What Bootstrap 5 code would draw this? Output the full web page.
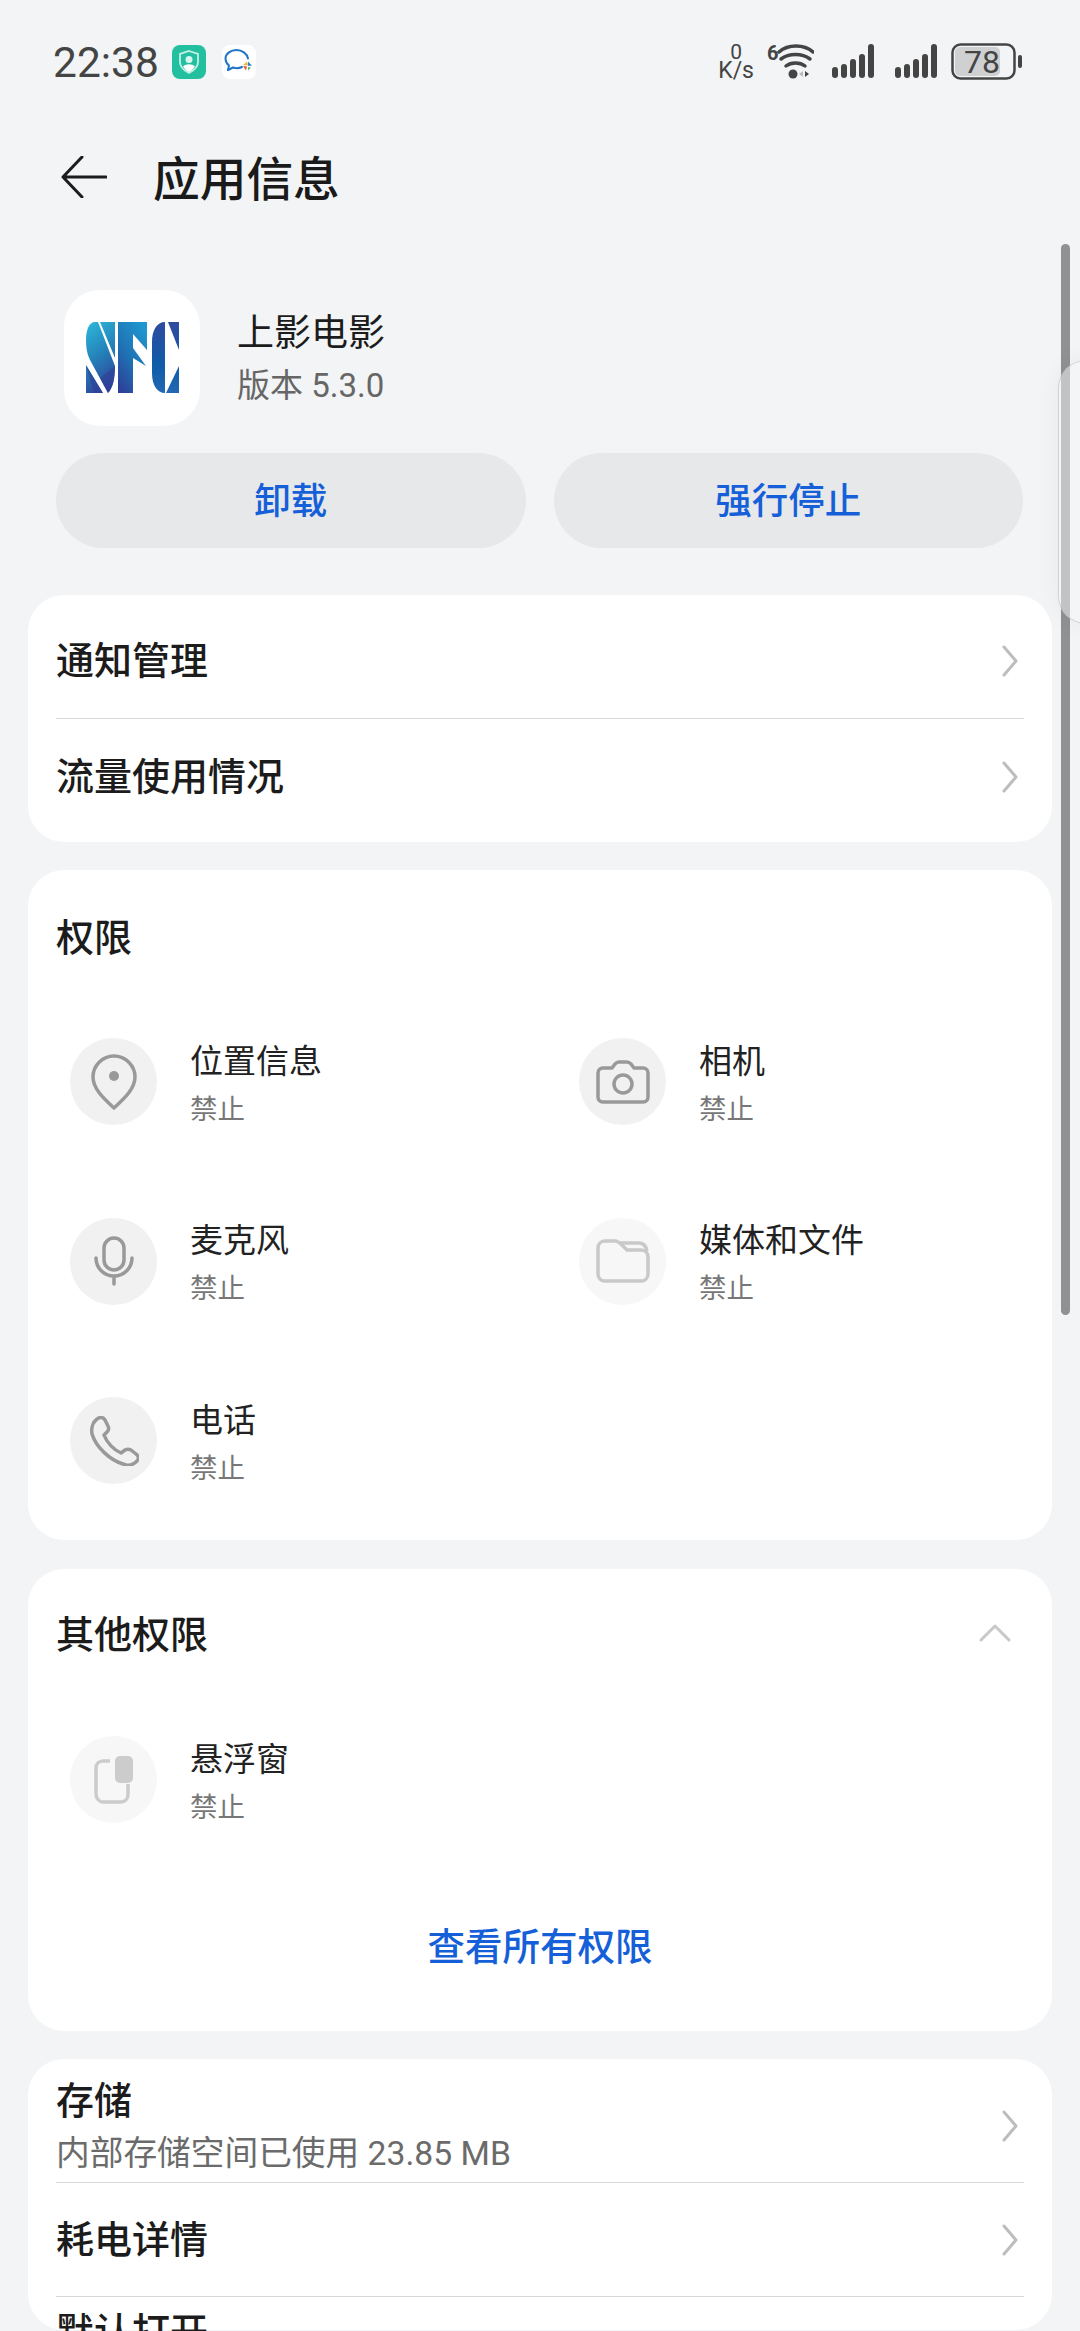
<!DOCTYPE html>
<html lang="zh"><head><meta charset="utf-8"><title>应用信息</title>
<link href="https://cdn.jsdelivr.net/npm/bootstrap@5.3.0/dist/css/bootstrap.min.css" rel="stylesheet">
<style>
html,body{height:2331px;overflow:hidden}
body{background:#f2f4f5;font-family:Roboto,"Noto Sans CJK SC",sans-serif;color:#1c1c1c;width:1080px;position:relative}
svg{display:block}
.sbar{height:122px;padding:45px 58px 0 53px;color:#444}
.clock{font-size:42.500px;line-height:36px;margin-right:13px}
.nicon{width:34px;height:34px;border-radius:8px}
.nicon.tint{background:#22c09f}
.nicon.second{margin-left:16px}
.rgroup{margin-top:-2px}
.kbs{font-size:23px;line-height:17px;text-align:center;margin-right:12px}
.kbs b{display:block;font-weight:400;font-size:21px;line-height:19px}
.gapa{margin-left:18px}.gapb{margin-left:21px}.gapc{margin-left:14px}
.tbar{height:110px;padding-left:61px}
.ttl{font-size:46.700px;font-weight:500;margin-left:46px;margin-top:6px;line-height:1;color:#1a1a1a}
.apphead{padding:0 0 0 64px;margin-top:58px;height:136px}
.logo{width:136px;height:136px;border-radius:36px;background:#fff}
.appmeta{margin-left:37px}
.appn{font-size:37px;line-height:50px}
.appv{font-size:33px;line-height:44px;color:#666;margin-top:5px}
.btnrow{padding:27px 57px 0 56px;gap:28px}
.pillbtn{flex:1;height:95px;border-radius:48px;background:#e6e8ea;color:#1560d8;font-size:36.500px;border:0;line-height:93px;padding:2px 0 0;font-weight:500}
.pane{background:#fff;border-radius:36px;margin:0 28px;padding:0 28px}
.pane1{margin-top:47px;height:247px}
.pane2{margin-top:28px;height:670px;padding-top:43px}
.pane3{margin-top:29px;height:462px;padding-top:41px}
.pane4{margin-top:28px;height:271px;padding-top:1px}
.rowi{font-size:38px;line-height:50px;position:relative;font-weight:500}
.rowi.sep{border-bottom:1.5px solid #d8d8d8}
.r1{height:124px;padding-top:9px}
.r2{height:122px;padding-bottom:7px}
.rstore{height:123px;padding-top:10px}
.rpow{height:114px}
.rdef{padding-top:10px}
.chev{margin-left:auto;margin-right:5px;flex:none}
.sub2{font-size:33.700px;font-weight:400;color:#6b6b6b;line-height:46px;margin-top:5px}
.h1t{font-size:38px;line-height:50px;font-weight:500}
.pitem{height:87px}
.pcirc{width:87px;height:87px;border-radius:50%;background:#f1f1f1;margin-left:14px;margin-right:33px;flex:none}
.pcirc.dim{background:#f7f7f7}
.ptext{padding-top:6px}
.pname{font-size:33px;line-height:46px;color:#222;margin-top:-2px}
.pstate{font-size:27.500px;line-height:38px;color:#777;margin-top:6px}
.grid2{display:grid;grid-template-columns:509px 1fr;row-gap:92.500px;margin-top:75px}
.single{margin-top:76px}
.seeall{color:#1560d8;font-size:37.500px;font-weight:500;text-align:center;line-height:50px;margin-top:99px}
.caret{right:40px;top:54px}
.sbthumb{position:absolute;left:1061px;top:244px;width:9px;height:1071px;border-radius:5px;background:#8f9193}
.edge{position:absolute;left:1058px;top:360px;width:40px;height:264px;border-radius:28px 0 0 28px;background:rgba(245,246,247,.5);border:1px solid rgba(185,187,190,.6);box-shadow:0 0 24px rgba(0,0,0,.05)}
</style></head><body>
<div class="sbar d-flex align-items-start">
  <span class="clock">22:38</span>
  <span class="nicon tint"><svg width="34" height="34" viewBox="0 0 34 34"><path d="M17 6l9 3v8c0 5-4 8.500-9 11-5-2.500-9-6-9-11V9z" fill="none" stroke="#c4f1e6" stroke-width="1.800"/><circle cx="17" cy="14.500" r="3.500" fill="#d8f7f0"/><path d="M11 21.500c3-3 9-3 12 0-2 3-4 4.500-6 5.500-2-1-4-2.500-6-5.500z" fill="#fff"/></svg></span>
  <span class="nicon second bg-white"><svg width="34" height="34" viewBox="0 0 34 34" fill="none"><path d="M6 25l1-4.500C4.500 18.500 3.500 16 3.500 13.500 3.500 8.500 9 5 14.500 5 20 5 25 8.500 26 13.500" stroke="#1f74c9" stroke-width="2" stroke-linecap="round" stroke-linejoin="round"/><path d="M6 25l5-2.500c3 1 6 1 9-.5" stroke="#1f74c9" stroke-width="2" stroke-linecap="round" stroke-linejoin="round"/><path d="M21 20l4-3.500 1 4z" fill="#e8b93c"/><path d="M26 16.500l4 4-4 .5z" fill="#2f80d8"/><path d="M21 21l4 .5-1 4z" fill="#df5a3b"/><path d="M26 22l3 .5-3 3z" fill="#58b368"/></svg></span>
  <span class="ms-auto d-flex align-items-start rgroup">
    <span class="kbs"><b>0</b>K/s</span>
    <svg width="48" height="36" viewBox="0 0 48 36" fill="#444"><text x="1" y="17" font-family="Roboto" font-size="20" font-weight="700">6</text><path d="M13 9C22 1 38 1 47 9" fill="none" stroke="#444" stroke-width="3.500" stroke-linecap="round"/><path d="M15 16c8-6 21-6 29 0" fill="none" stroke="#444" stroke-width="3.500" stroke-linecap="round"/><path d="M20 23c5-4 14-4 19 0" fill="none" stroke="#444" stroke-width="3.500" stroke-linecap="round"/><circle cx="27" cy="31" r="4.500"/><path d="M33 31l4-3v6z" fill="#bbb"/><path d="M39 28l4 3-4 3z"/></svg>
    <svg class="gapa" width="42" height="36" viewBox="0 0 42 36" fill="#444"><rect x="0" y="24" width="6" height="11" rx="3"/><rect x="9" y="21" width="6" height="14" rx="3"/><rect x="18" y="16" width="6" height="19" rx="3"/><rect x="27" y="11" width="6" height="24" rx="3"/><rect x="36" y="1" width="6" height="34" rx="3"/></svg>
    <svg class="gapb" width="42" height="36" viewBox="0 0 42 36" fill="#444"><rect x="0" y="24" width="6" height="11" rx="3"/><rect x="9" y="21" width="6" height="14" rx="3"/><rect x="18" y="16" width="6" height="19" rx="3"/><rect x="27" y="11" width="6" height="24" rx="3"/><rect x="36" y="1" width="6" height="34" rx="3"/></svg>
    <svg class="gapc" width="71" height="37" viewBox="0 0 71 37"><rect x="1.500" y="1.500" width="62" height="34" rx="8" fill="none" stroke="#444" stroke-width="2.500"/><rect x="4" y="4" width="45" height="29" rx="5" fill="#cfd0d1"/><rect x="67" y="12" width="4" height="13" rx="2" fill="#444"/><text x="31" y="29.500" text-anchor="middle" font-family="Roboto" font-size="32" fill="#444">78</text></svg>
  </span>
</div>
<div class="tbar d-flex align-items-center">
  <svg width="46" height="42" viewBox="0 0 46 42" fill="none" stroke="#1c1c1c" stroke-width="3" stroke-linecap="round" stroke-linejoin="round"><path d="M45 21H2M21 1L2 21l19 20"/></svg>
  <span class="ttl">应用信息</span>
</div>
<div class="apphead d-flex align-items-center">
  <div class="logo d-flex align-items-center justify-content-center flex-shrink-0">
    <svg width="93" height="72" viewBox="0 0 93 72">
      <defs><linearGradient id="g1" x1="0.200" y1="0" x2="0.500" y2="1"><stop offset="0" stop-color="#2bb4d8"/><stop offset=".5" stop-color="#2481b8"/><stop offset="1" stop-color="#2f439c"/></linearGradient>
      <linearGradient id="g2" x1="0.800" y1="0" x2="0.200" y2="1"><stop offset="0" stop-color="#1f98cf"/><stop offset=".55" stop-color="#1f72b4"/><stop offset="1" stop-color="#2c429a"/></linearGradient>
      <linearGradient id="g3" x1="0" y1="0" x2="0" y2="1"><stop offset="0" stop-color="#2f4a9f"/><stop offset=".6" stop-color="#0f5ca8"/><stop offset="1" stop-color="#2368b4"/></linearGradient></defs>
      <path d="M9 0h3l17 44c0 12-2 22-7 27L4 38C1 32 0 26 0 18 0 8 3 0 9 0zM14 0h15v36zM0 43l17 28H0z" fill="url(#g1)"/>
      <path d="M0 43l17 28H8z M29 44c0 12-2 22-7 27L14 56z" fill="#2f3f96" opacity=".6"/>
      <path d="M32 0h29v28L47 12v14l13 18-13-8v35H32z" fill="url(#g2)"/>
      <path d="M66 20C66 8 71 0 79 0v71c-8 0-13-8-13-20zM82 0h11v28zM93 44v27H80z" fill="url(#g3)"/>
    </svg>
  </div>
  <div class="appmeta">
    <div class="appn">上影电影</div>
    <div class="appv">版本 5.3.0</div>
  </div>
</div>
<div class="btnrow d-flex">
  <button class="pillbtn" type="button">卸载</button>
  <button class="pillbtn" type="button">强行停止</button>
</div>
<div class="pane pane1">
  <div class="rowi sep r1 d-flex align-items-center">通知管理<svg class="chev" width="18" height="32" viewBox="0 0 18 32" fill="none" stroke="#bdbdbd" stroke-width="3" stroke-linecap="round" stroke-linejoin="round"><path d="M3 2l12 14L3 30"/></svg></div>
  <div class="rowi r2 d-flex align-items-center">流量使用情况<svg class="chev" width="18" height="32" viewBox="0 0 18 32" fill="none" stroke="#bdbdbd" stroke-width="3" stroke-linecap="round" stroke-linejoin="round"><path d="M3 2l12 14L3 30"/></svg></div>
</div>
<div class="pane pane2">
  <div class="h1t">权限</div>
  <div class="grid2">
    <div class="pitem d-flex align-items-center"><span class="pcirc d-flex align-items-center justify-content-center"><svg width="48" height="58" viewBox="0 0 48 58" fill="none" stroke="#999" stroke-width="3.500"><path d="M24 55C12 44 3 35 3 24a21 21 0 0 1 42 0c0 11-9 20-21 31z" stroke-linejoin="round"/><circle cx="24" cy="23" r="5" fill="#999" stroke="none"/></svg></span><div class="ptext"><div class="pname">位置信息</div><div class="pstate">禁止</div></div></div>
    <div class="pitem d-flex align-items-center"><span class="pcirc d-flex align-items-center justify-content-center"><svg width="54" height="44" viewBox="0 0 54 44" fill="none" stroke="#999" stroke-width="3.500"><path d="M7 8h9l3-4c1-1 2-2 4-2h8c2 0 3 1 4 2l3 4h9c3 0 5 2 5 5v24c0 3-2 5-5 5H7c-3 0-5-2-5-5V13c0-3 2-5 5-5z" stroke-linejoin="round"/><circle cx="27" cy="24" r="9"/></svg></span><div class="ptext"><div class="pname">相机</div><div class="pstate">禁止</div></div></div>
    <div class="pitem d-flex align-items-center"><span class="pcirc d-flex align-items-center justify-content-center"><svg width="40" height="50" viewBox="0 0 40 50" fill="none" stroke="#999" stroke-width="3.500" stroke-linecap="round"><rect x="10" y="2" width="20" height="32" rx="10"/><path d="M2 22c0 10 8 18 18 18s18-8 18-18M20 40v8"/></svg></span><div class="ptext"><div class="pname">麦克风</div><div class="pstate">禁止</div></div></div>
    <div class="pitem d-flex align-items-center"><span class="pcirc dim d-flex align-items-center justify-content-center"><svg width="54" height="44" viewBox="0 0 54 44" fill="none" stroke="#c9c9c9" stroke-width="3.500" stroke-linejoin="round"><path d="M2 9c0-4 3-7 7-7h10c3 0 5 2 7 4l5 5h14c4 0 7 3 7 7v17c0 4-3 7-7 7H9c-4 0-7-3-7-7z"/><path d="M24 4h19c4 0 7 3 8 8"/></svg></span><div class="ptext"><div class="pname">媒体和文件</div><div class="pstate">禁止</div></div></div>
    <div class="pitem d-flex align-items-center"><span class="pcirc d-flex align-items-center justify-content-center"><svg width="50" height="50" viewBox="0 0 50 50" fill="none" stroke="#999" stroke-width="3.500" stroke-linejoin="round"><path d="M8 3c3-2 6-2 8 1l3 6c1 2 1 4-1 6l-3 3c3 8 10 15 17 18l4-3c2-1 4-1 6 0l5 4c3 2 3 5 1 7-3 3-7 5-11 4C21 45 7 31 3 18 2 12 4 6 8 3z"/></svg></span><div class="ptext"><div class="pname">电话</div><div class="pstate">禁止</div></div></div>
  </div>
</div>
<div class="pane pane3 position-relative">
  <div class="h1t">其他权限</div>
  <svg class="caret position-absolute" width="34" height="20" viewBox="0 0 34 20" fill="none" stroke="#c8c8c8" stroke-width="3" stroke-linecap="round" stroke-linejoin="round"><path d="M3 17L17 3l14 14"/></svg>
  <div class="pitem single d-flex align-items-center"><span class="pcirc dim d-flex align-items-center justify-content-center"><svg width="40" height="48" viewBox="0 0 40 48" fill="none"><path d="M16 5H9C5 5 2 8 2 12v26c0 4 3 8 7 8h18c4 0 7-3 7-8V28" stroke="#ccc" stroke-width="3.500"/><rect x="21" y="0" width="18" height="27" rx="5" fill="#ccc"/></svg></span><div class="ptext"><div class="pname">悬浮窗</div><div class="pstate">禁止</div></div></div>
  <div class="seeall">查看所有权限</div>
</div>
<div class="pane pane4">
  <div class="rowi sep rstore d-flex align-items-center"><div class="d-flex flex-column"><span>存储</span><span class="sub2">内部存储空间已使用 23.85 MB</span></div><svg class="chev" width="18" height="32" viewBox="0 0 18 32" fill="none" stroke="#bdbdbd" stroke-width="3" stroke-linecap="round" stroke-linejoin="round"><path d="M3 2l12 14L3 30"/></svg></div>
  <div class="rowi sep rpow d-flex align-items-center">耗电详情<svg class="chev" width="18" height="32" viewBox="0 0 18 32" fill="none" stroke="#bdbdbd" stroke-width="3" stroke-linecap="round" stroke-linejoin="round"><path d="M3 2l12 14L3 30"/></svg></div>
  <div class="rowi rdef">默认打开</div>
</div>
<div class="sbthumb"></div>
<div class="edge"></div>
<script src="https://cdn.jsdelivr.net/npm/bootstrap@5.3.0/dist/js/bootstrap.bundle.min.js"></script>
</body></html>
